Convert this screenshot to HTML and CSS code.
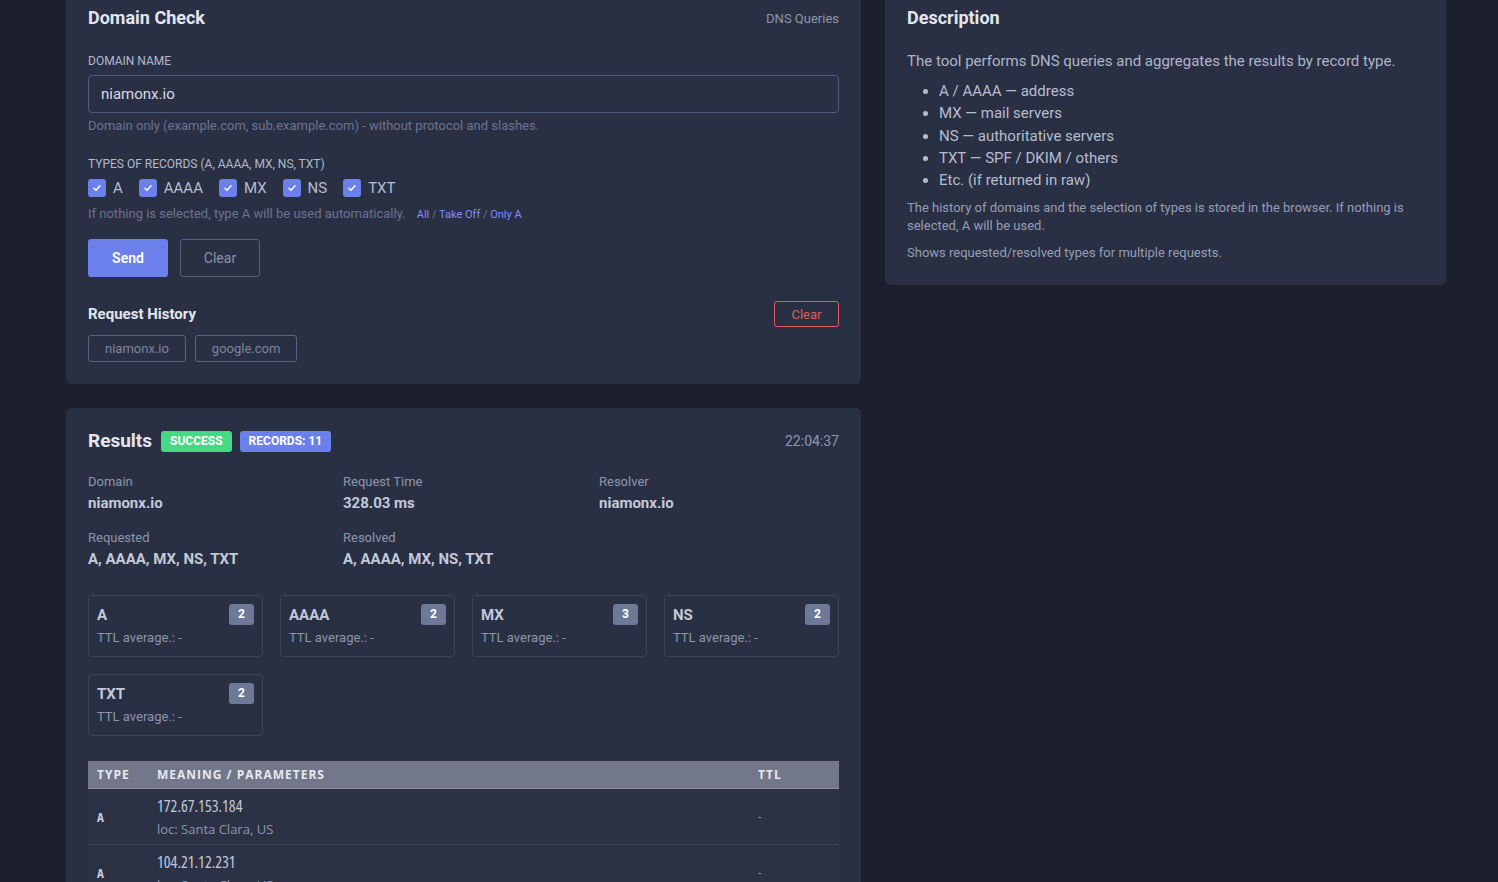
FILE: index.html
```html
<!DOCTYPE html>
<html>
<head>
    <meta name="viewport" content="width=device-width, initial-scale=1.0">
    <title>Domain Check - DNS Queries</title>
    <link rel="stylesheet" href="styles.css">
</head>
<body>
    <div class="layout">
        <div class="column">
            <div class="card card-form">
                <div class="card-head">
                    <h2>Domain Check</h2>
                    <span class="muted">DNS Queries</span>
                </div>

                <label class="field-label">DOMAIN NAME</label>
                <input type="text" class="domain-input" value="niamonx.io">
                <div class="hint">Domain only (example.com, sub.example.com) - without protocol and slashes.</div>

                <label class="field-label types-label">TYPES OF RECORDS (A, AAAA, MX, NS, TXT)</label>
                <div class="types">
                    <label class="check"><span class="box"><svg width="10" height="10" viewBox="0 0 10 10"><path d="M2 5.2l2 2 4-4.4" fill="none" stroke="#fff" stroke-width="1.5" stroke-linecap="round" stroke-linejoin="round"/></svg></span>A</label>
                    <label class="check"><span class="box"><svg width="10" height="10" viewBox="0 0 10 10"><path d="M2 5.2l2 2 4-4.4" fill="none" stroke="#fff" stroke-width="1.5" stroke-linecap="round" stroke-linejoin="round"/></svg></span>AAAA</label>
                    <label class="check"><span class="box"><svg width="10" height="10" viewBox="0 0 10 10"><path d="M2 5.2l2 2 4-4.4" fill="none" stroke="#fff" stroke-width="1.5" stroke-linecap="round" stroke-linejoin="round"/></svg></span>MX</label>
                    <label class="check"><span class="box"><svg width="10" height="10" viewBox="0 0 10 10"><path d="M2 5.2l2 2 4-4.4" fill="none" stroke="#fff" stroke-width="1.5" stroke-linecap="round" stroke-linejoin="round"/></svg></span>NS</label>
                    <label class="check"><span class="box"><svg width="10" height="10" viewBox="0 0 10 10"><path d="M2 5.2l2 2 4-4.4" fill="none" stroke="#fff" stroke-width="1.5" stroke-linecap="round" stroke-linejoin="round"/></svg></span>TXT</label>
                </div>
                <div class="hint types-hint">
                    If nothing is selected, type A will be used automatically.
                    <span class="quick"><a>All</a> / <a>Take Off</a> / <a>Only A</a></span>
                </div>

                <div class="actions">
                    <button class="btn btn-primary">Send</button>
                    <button class="btn btn-ghost">Clear</button>
                </div>

                <div class="history-head">
                    <h3>Request History</h3>
                    <button class="btn-danger">Clear</button>
                </div>
                <div class="chips">
                    <span class="chip">niamonx.io</span>
                    <span class="chip">google.com</span>
                </div>
            </div>

            <div class="card card-results">
                <div class="card-head">
                    <div class="results-title">
                        <h2>Results</h2>
                        <span class="badge badge-green">SUCCESS</span>
                        <span class="badge badge-blue">RECORDS: 11</span>
                    </div>
                    <span class="muted time">22:04:37</span>
                </div>

                <div class="info-grid">
                    <div><div class="info-label">Domain</div><div class="info-value">niamonx.io</div></div>
                    <div><div class="info-label">Request Time</div><div class="info-value">328.03 ms</div></div>
                    <div><div class="info-label">Resolver</div><div class="info-value">niamonx.io</div></div>
                    <div><div class="info-label">Requested</div><div class="info-value">A, AAAA, MX, NS, TXT</div></div>
                    <div><div class="info-label">Resolved</div><div class="info-value">A, AAAA, MX, NS, TXT</div></div>
                </div>

                <div class="type-grid">
                    <div class="type-card"><div class="type-top"><b>A</b><span class="count">2</span></div><div class="ttl">TTL average.: -</div></div>
                    <div class="type-card"><div class="type-top"><b>AAAA</b><span class="count">2</span></div><div class="ttl">TTL average.: -</div></div>
                    <div class="type-card"><div class="type-top"><b>MX</b><span class="count">3</span></div><div class="ttl">TTL average.: -</div></div>
                    <div class="type-card"><div class="type-top"><b>NS</b><span class="count">2</span></div><div class="ttl">TTL average.: -</div></div>
                    <div class="type-card"><div class="type-top"><b>TXT</b><span class="count">2</span></div><div class="ttl">TTL average.: -</div></div>
                </div>

                <table class="records">
                    <thead>
                        <tr><th class="col-type">TYPE</th><th>MEANING / PARAMETERS</th><th class="col-ttl">TTL</th></tr>
                    </thead>
                    <tbody>
                        <tr>
                            <td class="rec-type">A</td>
                            <td><div class="rec-value">172.67.153.184</div><div class="rec-meta">loc: Santa Clara, US</div></td>
                            <td class="rec-ttl">-</td>
                        </tr>
                        <tr>
                            <td class="rec-type">A</td>
                            <td><div class="rec-value">104.21.12.231</div><div class="rec-meta">loc: Santa Clara, US</div></td>
                            <td class="rec-ttl">-</td>
                        </tr>
                    </tbody>
                </table>
            </div>
        </div>

        <div class="column">
            <div class="card card-desc">
                <h2>Description</h2>
                <p class="lead">The tool performs DNS queries and aggregates the results by record type.</p>
                <ul>
                    <li>A / AAAA — address</li>
                    <li>MX — mail servers</li>
                    <li>NS — authoritative servers</li>
                    <li>TXT — SPF / DKIM / others</li>
                    <li>Etc. (if returned in raw)</li>
                </ul>
                <p class="small">The history of domains and the selection of types is stored in the browser. If nothing is selected, A will be used.</p>
                <p class="small">Shows requested/resolved types for multiple requests.</p>
            </div>
        </div>
    </div>
</body>
</html>
```
FILE: styles.css
```css
:root {
    --page-bg: #1d202c;
    --card-bg: #2a3043;
    --border: #3b4359;
    --title: #e3e6ee;
    --text: #c2c8d8;
    --muted: #8d95ad;
    --faint: #6a7391;
    --accent: #6b80ea;
    --green: #46d884;
    --red: #e35a5a;
}

body {
    font-family: Roboto, 'Noto Sans', sans-serif;
    background-color: var(--page-bg);
    margin: 0;
    color: var(--text);
}

.layout {
    display: grid;
    grid-template-columns: 795px 561px;
    gap: 24px;
    padding-left: 66px;
    align-items: start;
}

.column {
    display: flex;
    flex-direction: column;
    gap: 24px;
}

.card {
    background: var(--card-bg);
    border-radius: 0 0 6px 6px;
    padding: 6px 22px 22px;
}

.card-results {
    border-radius: 6px;
    padding-top: 21px;
}

h2 {
    margin: 0;
    font-size: 18px;
    font-weight: 700;
    color: var(--title);
    line-height: 24px;
}

h3 {
    margin: 0;
    font-size: 15px;
    font-weight: 700;
    color: var(--title);
}

.card-head {
    display: flex;
    justify-content: space-between;
    align-items: center;
}

.muted {
    font-size: 13px;
    color: var(--muted);
}

.time {
    font-size: 14px;
}

.field-label {
    display: block;
    font-size: 12px;
    line-height: 14px;
    color: #b2b9cc;
    margin-top: 24px;
    margin-bottom: 7px;
}

.domain-input {
    display: block;
    box-sizing: border-box;
    width: 100%;
    height: 38px;
    background: transparent;
    border: 1px solid #4e5a7e;
    border-radius: 4px;
    padding: 0 12px;
    font-family: inherit;
    font-size: 15px;
    color: #d6dbe8;
}

.hint {
    font-size: 13px;
    line-height: 15px;
    color: var(--faint);
    margin-top: 5px;
}

.types-label {
    margin-top: 24px;
    margin-bottom: 8px;
}

.types {
    display: flex;
    gap: 16px;
}

.check {
    display: flex;
    align-items: center;
    gap: 7px;
    font-size: 15px;
    line-height: 18px;
    color: #b6bdd0;
}

.box {
    width: 18px;
    height: 18px;
    border-radius: 3px;
    background: var(--accent);
    display: flex;
    align-items: center;
    justify-content: center;
}

.types-hint {
    margin-top: 9px;
}

.quick {
    margin-left: 8px;
    font-size: 11px;
    color: var(--faint);
}

.quick a {
    color: #7d8ff0;
}

.actions {
    display: flex;
    gap: 12px;
    margin-top: 17px;
}

.btn {
    width: 80px;
    height: 38px;
    border-radius: 3px;
    font-family: inherit;
    font-size: 14px;
}

.btn-primary {
    background: var(--accent);
    border: none;
    color: white;
    font-weight: 600;
}

.btn-ghost {
    background: transparent;
    border: 1px solid #56617d;
    color: #8890a8;
}

.history-head {
    display: flex;
    justify-content: space-between;
    align-items: center;
    margin-top: 24px;
}

.btn-danger {
    width: 65px;
    height: 26px;
    background: transparent;
    border: 1px solid var(--red);
    border-radius: 3px;
    color: var(--red);
    font-family: inherit;
    font-size: 13px;
}

.chips {
    display: flex;
    gap: 9px;
    margin-top: 8px;
}

.chip {
    border: 1px solid #58637e;
    border-radius: 3px;
    padding: 0 16px;
    height: 25px;
    line-height: 25px;
    font-size: 13px;
    color: #7b849d;
}

.results-title {
    display: flex;
    align-items: center;
    gap: 8px;
}

.results-title h2 {
    font-size: 19px;
    margin-right: 1px;
}

.badge {
    font-size: 12px;
    font-weight: 700;
    color: white;
    padding: 0 9px;
    height: 21px;
    line-height: 21px;
    border-radius: 3px;
}

.badge-green {
    background: var(--green);
}

.badge-blue {
    background: var(--accent);
}

.info-grid {
    display: grid;
    grid-template-columns: 255px 256px 1fr;
    row-gap: 17px;
    margin-top: 20px;
}

.info-label {
    font-size: 13px;
    color: var(--muted);
    line-height: 18px;
}

.info-value {
    font-size: 15px;
    line-height: 18px;
    font-weight: 700;
    color: #c3c9d9;
    margin-top: 3px;
}

.type-grid {
    display: grid;
    grid-template-columns: repeat(4, 1fr);
    gap: 17px;
    margin-top: 27px;
}

.type-card {
    border: 1px solid var(--border);
    border-radius: 4px;
    padding: 8px;
    height: 62px;
    box-sizing: border-box;
}

.type-top {
    display: flex;
    justify-content: space-between;
    align-items: center;
    font-size: 15px;
    color: #c3c9d9;
}

.count {
    background: #6d7995;
    color: white;
    font-size: 12px;
    font-weight: 700;
    width: 25px;
    height: 21px;
    line-height: 21px;
    text-align: center;
    border-radius: 3px;
}

.ttl {
    font-size: 13px;
    line-height: 15px;
    color: var(--muted);
    margin-top: 5px;
}

.records {
    width: 100%;
    table-layout: fixed;
    border-collapse: collapse;
    margin-top: 25px;
    font-family: 'Open Sans', sans-serif;
    font-stretch: 75%;
}

.records th {
    background: #72778a;
    color: #e6e8ef;
    font-size: 12px;
    font-weight: 700;
    font-stretch: 100%;
    letter-spacing: 1px;
    text-align: left;
    height: 27px;
    padding: 0 9px;
    border-bottom: 1px solid #8a8fa0;
}

.records .col-type {
    box-sizing: border-box;
    width: 60px;
}

.records .col-ttl {
    box-sizing: border-box;
    width: 90px;
}

.records td {
    background: #2c3246;
    border-bottom: 1px solid var(--border);
    padding: 5px 9px;
    height: 45px;
    vertical-align: middle;
}

.rec-type {
    font-size: 13px;
    font-weight: 700;
    color: #c3c9d9;
}

.rec-value {
    font-size: 16px;
    color: #c3c9d9;
}

.rec-meta {
    font-size: 13px;
    font-stretch: 95%;
    color: var(--muted);
    margin-top: 3px;
}

.rec-ttl {
    color: var(--muted);
    font-size: 12px;
}

.card-desc p.lead {
    font-size: 15px;
    line-height: 18px;
    color: #aeb5ca;
    margin: 22px 0 10px;
}

.card-desc ul {
    margin: 0;
    padding-left: 32px;
    font-size: 15px;
    color: #b6bdd0;
    line-height: 22.3px;
}

.card-desc p.small {
    font-size: 13px;
    color: #959db5;
    line-height: 18px;
    margin: 8px 0 0;
}

.card-desc p.small + p.small {
    margin-top: 9px;
}

.card-desc {
    padding-bottom: 23px;
}
```
